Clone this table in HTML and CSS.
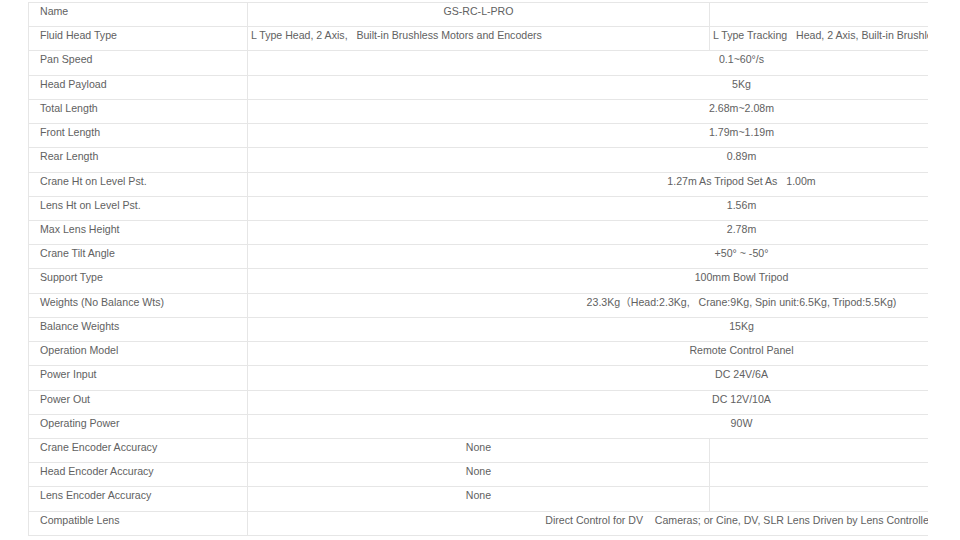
FILE: index.html
```html
<!DOCTYPE html>
<html>
<head>
<meta charset="utf-8">
<link rel="stylesheet" href="styles.css">
</head>
<body>
<div class="spec-wrap">
<table class="spec">
<colgroup><col class="c1"><col class="c2"><col class="c3"></colgroup>
<tr><td class="k">Name</td><td class="v">GS-RC-L-PRO</td><td class="v"></td></tr>
<tr><td class="k">Fluid Head Type</td><td class="l">L Type Head, 2 Axis,&nbsp;&nbsp; Built-in Brushless Motors and Encoders</td><td class="l">L Type Tracking&nbsp;&nbsp; Head, 2 Axis, Built-in Brushless Motors and Encoders</td></tr>
<tr><td class="k">Pan Speed</td><td class="v" colspan="2">0.1~60°/s</td></tr>
<tr><td class="k">Head Payload</td><td class="v" colspan="2">5Kg</td></tr>
<tr><td class="k">Total Length</td><td class="v" colspan="2">2.68m~2.08m</td></tr>
<tr><td class="k">Front Length</td><td class="v" colspan="2">1.79m~1.19m</td></tr>
<tr><td class="k">Rear Length</td><td class="v" colspan="2">0.89m</td></tr>
<tr><td class="k">Crane Ht on Level Pst.</td><td class="v" colspan="2">1.27m As Tripod Set As&nbsp;&nbsp; 1.00m</td></tr>
<tr><td class="k">Lens Ht on Level Pst.</td><td class="v" colspan="2">1.56m</td></tr>
<tr><td class="k">Max Lens Height</td><td class="v" colspan="2">2.78m</td></tr>
<tr><td class="k">Crane Tilt Angle</td><td class="v" colspan="2">+50° ~ -50°</td></tr>
<tr><td class="k">Support Type</td><td class="v" colspan="2">100mm Bowl Tripod</td></tr>
<tr><td class="k">Weights (No Balance Wts)</td><td class="v" colspan="2">23.3Kg（Head:2.3Kg,&nbsp;&nbsp; Crane:9Kg, Spin unit:6.5Kg, Tripod:5.5Kg)</td></tr>
<tr><td class="k">Balance Weights</td><td class="v" colspan="2">15Kg</td></tr>
<tr><td class="k">Operation Model</td><td class="v" colspan="2">Remote Control Panel</td></tr>
<tr><td class="k">Power Input</td><td class="v" colspan="2">DC 24V/6A</td></tr>
<tr><td class="k">Power Out</td><td class="v" colspan="2">DC 12V/10A</td></tr>
<tr><td class="k">Operating Power</td><td class="v" colspan="2">90W</td></tr>
<tr><td class="k">Crane Encoder Accuracy</td><td class="v">None</td><td class="v"></td></tr>
<tr><td class="k">Head Encoder Accuracy</td><td class="v">None</td><td class="v"></td></tr>
<tr><td class="k">Lens Encoder Accuracy</td><td class="v">None</td><td class="v"></td></tr>
<tr><td class="k">Compatible Lens</td><td class="v" colspan="2">Direct Control for DV&nbsp;&nbsp;&nbsp; Cameras; or Cine, DV, SLR Lens Driven by Lens Controllers</td></tr>
</table>
</div>
</body>
</html>
```
FILE: styles.css
```css
html, body {
  margin: 0;
  padding: 0;
  background: #ffffff;
}
body {
  font-family: "Liberation Sans", Arial, "Noto Sans CJK SC", sans-serif;
  font-size: 10.6px;
  color: #616161;
}
.spec-wrap {
  margin: 2px 0 0 28px;
  width: 900px;
  overflow: hidden;
}
.spec {
  border-collapse: collapse;
  table-layout: fixed;
  width: 1207px;
}
.c1 { width: 219px; }
.c2 { width: 462px; }
.c3 { width: 526px; }
.spec td {
  border: 1px solid #e6e6e6;
  height: 24.23px;
  box-sizing: border-box;
  padding: 0 4px;
  line-height: 16px;
  vertical-align: top;
  white-space: nowrap;
  overflow: hidden;
}
.spec td.k {
  padding-left: 11px;
}
.spec td.v {
  text-align: center;
}
.spec td.l {
  text-align: left;
  padding-left: 3px;
}
```
